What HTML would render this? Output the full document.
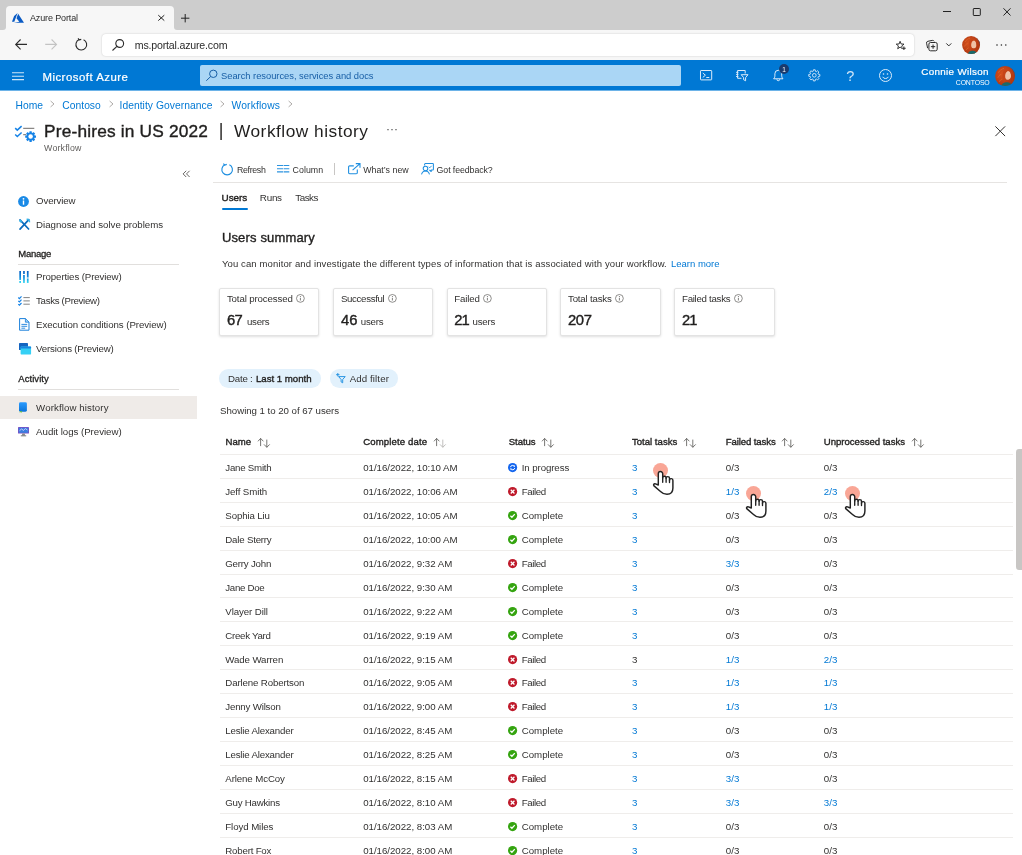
<!DOCTYPE html>
<html><head><meta charset="utf-8"><title>Azure Portal</title>
<style>
*{box-sizing:border-box;margin:0;padding:0}
html,body{width:1022px;height:855px;overflow:hidden;background:#fff}
body{font-family:"Liberation Sans","DejaVu Sans",sans-serif;color:#323130;font-size:10px;position:relative}
.a{position:absolute}
.t{position:absolute;white-space:nowrap;line-height:1}
.hl{position:absolute;height:1px;background:#efedeb}
.card{position:absolute;top:288px;width:100.2px;height:47.5px;background:#fff;border:1px solid #e3e3e3;border-radius:2px;box-shadow:0 1px 2.5px rgba(0,0,0,.13)}
.pill{position:absolute;top:369.3px;height:18.600px;border-radius:9.300px;background:#e2f1fc}
svg{position:absolute;overflow:visible}
</style></head><body>
<div class="a" style="left:0;top:0;width:1022px;height:60px;background:#f7f7f7"></div>
<div class="a" style="left:0;top:0;width:1022px;height:12px;background:#cdcdcd"></div>
<div class="a" style="left:0;top:0;width:5.900px;height:29.800px;background:#cdcdcd;border-radius:0 0 3px 0"></div>
<div class="a" style="left:173.900px;top:0;width:848.100px;height:29.800px;background:#cdcdcd;border-radius:0 0 0 3px"></div>
<div class="a" style="left:5.900px;top:5.700px;width:168px;height:12px;background:#f7f7f7;border-radius:4px 4px 0 0"></div>
<div class="a" style="left:102px;top:33.5px;width:812px;height:22.5px;background:#fff;border-radius:4px;box-shadow:0 0 2px rgba(0,0,0,.2)"></div>
<div class="a" style="left:0;top:60px;width:1022px;height:30px;background:#0078d4"></div>
<div class="a" style="left:0;top:90px;width:1022px;height:1px;background:#6db3e8"></div>
<div class="a" style="left:200px;top:65px;width:481px;height:20.500px;background:#aad6f5;border-radius:2px"></div>
<div class="a" style="left:0;top:395.5px;width:197px;height:23.5px;background:#efebe8"></div>
<div class="hl" style="left:18px;top:264px;width:161px;background:#e1dfdd"></div>
<div class="hl" style="left:18px;top:389px;width:161px;background:#e1dfdd"></div>
<div class="hl" style="left:213px;top:182px;width:794px;background:#e6e4e2"></div>
<div class="a" style="left:221.5px;top:208px;width:26px;height:2px;background:#0078d4;border-radius:1px"></div>
<div class="card" style="left:219.3px"></div>
<div class="card" style="left:333.3px"></div>
<div class="card" style="left:446.7px"></div>
<div class="card" style="left:560.4px"></div>
<div class="card" style="left:674.4px"></div>
<div class="pill" style="left:218.5px;width:102px"></div>
<div class="pill" style="left:329.5px;width:68px"></div>
<div class="hl" style="left:219.5px;top:453.80px;width:793.3px"></div>
<div class="hl" style="left:219.5px;top:477.74px;width:793.3px"></div>
<div class="hl" style="left:219.5px;top:501.68px;width:793.3px"></div>
<div class="hl" style="left:219.5px;top:525.62px;width:793.3px"></div>
<div class="hl" style="left:219.5px;top:549.56px;width:793.3px"></div>
<div class="hl" style="left:219.5px;top:573.50px;width:793.3px"></div>
<div class="hl" style="left:219.5px;top:597.44px;width:793.3px"></div>
<div class="hl" style="left:219.5px;top:621.38px;width:793.3px"></div>
<div class="hl" style="left:219.5px;top:645.32px;width:793.3px"></div>
<div class="hl" style="left:219.5px;top:669.26px;width:793.3px"></div>
<div class="hl" style="left:219.5px;top:693.20px;width:793.3px"></div>
<div class="hl" style="left:219.5px;top:717.14px;width:793.3px"></div>
<div class="hl" style="left:219.5px;top:741.08px;width:793.3px"></div>
<div class="hl" style="left:219.5px;top:765.02px;width:793.3px"></div>
<div class="hl" style="left:219.5px;top:788.96px;width:793.3px"></div>
<div class="hl" style="left:219.5px;top:812.90px;width:793.3px"></div>
<div class="hl" style="left:219.5px;top:836.84px;width:793.3px"></div>
<div class="hl" style="left:219.5px;top:860.78px;width:793.3px"></div>
<div class="a" style="left:1016px;top:448.700px;width:8px;height:121.700px;background:#c8c6c4;border-radius:3px"></div>
<svg style="left:508.44999999999993px;top:462.84999999999997px" width="9.2" height="9.2" viewBox="0 0 16 16"><circle cx="8" cy="8" r="8" fill="#1466ee"/><path d="M4.3 7.2a3.8 3.8 0 0 1 7-1.2M11.7 8.8a3.8 3.8 0 0 1-7 1.2" fill="none" stroke="#fff" stroke-width="1.7"/><path d="M11.9 3.6v3h-3zM4.1 12.4v-3h3z" fill="#fff"/></svg>
<svg style="left:508.44999999999993px;top:486.84999999999997px" width="9.2" height="9.2" viewBox="0 0 16 16"><circle cx="8" cy="8" r="8" fill="#bf1a2b"/><path d="M4.800 4.800l6.400 6.400M11.200 4.800l-6.400 6.400" fill="none" stroke="#fff" stroke-width="2.2"/></svg>
<svg style="left:508.44999999999993px;top:510.85px" width="9.2" height="9.2" viewBox="0 0 16 16"><circle cx="8" cy="8" r="8" fill="#35a410"/><path d="M4.2 8.3l2.6 2.6 5-5.4" fill="none" stroke="#fff" stroke-width="2.2"/></svg>
<svg style="left:508.44999999999993px;top:534.85px" width="9.2" height="9.2" viewBox="0 0 16 16"><circle cx="8" cy="8" r="8" fill="#35a410"/><path d="M4.2 8.3l2.6 2.6 5-5.4" fill="none" stroke="#fff" stroke-width="2.2"/></svg>
<svg style="left:508.44999999999993px;top:558.85px" width="9.2" height="9.2" viewBox="0 0 16 16"><circle cx="8" cy="8" r="8" fill="#bf1a2b"/><path d="M4.800 4.800l6.400 6.400M11.200 4.800l-6.400 6.400" fill="none" stroke="#fff" stroke-width="2.2"/></svg>
<svg style="left:508.44999999999993px;top:582.85px" width="9.2" height="9.2" viewBox="0 0 16 16"><circle cx="8" cy="8" r="8" fill="#35a410"/><path d="M4.2 8.3l2.6 2.6 5-5.4" fill="none" stroke="#fff" stroke-width="2.2"/></svg>
<svg style="left:508.44999999999993px;top:606.85px" width="9.2" height="9.2" viewBox="0 0 16 16"><circle cx="8" cy="8" r="8" fill="#35a410"/><path d="M4.2 8.3l2.6 2.6 5-5.4" fill="none" stroke="#fff" stroke-width="2.2"/></svg>
<svg style="left:508.44999999999993px;top:630.85px" width="9.2" height="9.2" viewBox="0 0 16 16"><circle cx="8" cy="8" r="8" fill="#35a410"/><path d="M4.2 8.3l2.6 2.6 5-5.4" fill="none" stroke="#fff" stroke-width="2.2"/></svg>
<svg style="left:508.44999999999993px;top:654.85px" width="9.2" height="9.2" viewBox="0 0 16 16"><circle cx="8" cy="8" r="8" fill="#bf1a2b"/><path d="M4.800 4.800l6.400 6.400M11.200 4.800l-6.400 6.400" fill="none" stroke="#fff" stroke-width="2.2"/></svg>
<svg style="left:508.44999999999993px;top:677.85px" width="9.2" height="9.2" viewBox="0 0 16 16"><circle cx="8" cy="8" r="8" fill="#bf1a2b"/><path d="M4.800 4.800l6.400 6.400M11.200 4.800l-6.400 6.400" fill="none" stroke="#fff" stroke-width="2.2"/></svg>
<svg style="left:508.44999999999993px;top:701.85px" width="9.2" height="9.2" viewBox="0 0 16 16"><circle cx="8" cy="8" r="8" fill="#bf1a2b"/><path d="M4.800 4.800l6.400 6.400M11.200 4.800l-6.400 6.400" fill="none" stroke="#fff" stroke-width="2.2"/></svg>
<svg style="left:508.44999999999993px;top:725.85px" width="9.2" height="9.2" viewBox="0 0 16 16"><circle cx="8" cy="8" r="8" fill="#35a410"/><path d="M4.2 8.3l2.6 2.6 5-5.4" fill="none" stroke="#fff" stroke-width="2.2"/></svg>
<svg style="left:508.44999999999993px;top:749.85px" width="9.2" height="9.2" viewBox="0 0 16 16"><circle cx="8" cy="8" r="8" fill="#35a410"/><path d="M4.2 8.3l2.6 2.6 5-5.4" fill="none" stroke="#fff" stroke-width="2.2"/></svg>
<svg style="left:508.44999999999993px;top:773.85px" width="9.2" height="9.2" viewBox="0 0 16 16"><circle cx="8" cy="8" r="8" fill="#bf1a2b"/><path d="M4.800 4.800l6.400 6.400M11.200 4.800l-6.400 6.400" fill="none" stroke="#fff" stroke-width="2.2"/></svg>
<svg style="left:508.44999999999993px;top:797.85px" width="9.2" height="9.2" viewBox="0 0 16 16"><circle cx="8" cy="8" r="8" fill="#bf1a2b"/><path d="M4.800 4.800l6.400 6.400M11.200 4.800l-6.400 6.400" fill="none" stroke="#fff" stroke-width="2.2"/></svg>
<svg style="left:508.44999999999993px;top:821.85px" width="9.2" height="9.2" viewBox="0 0 16 16"><circle cx="8" cy="8" r="8" fill="#35a410"/><path d="M4.2 8.3l2.6 2.6 5-5.4" fill="none" stroke="#fff" stroke-width="2.2"/></svg>
<svg style="left:508.44999999999993px;top:845.85px" width="9.2" height="9.2" viewBox="0 0 16 16"><circle cx="8" cy="8" r="8" fill="#35a410"/><path d="M4.2 8.3l2.6 2.6 5-5.4" fill="none" stroke="#fff" stroke-width="2.2"/></svg>
<div class="a" style="left:652.8px;top:463.2px;width:15.2px;height:15.2px;border-radius:50%;background:#f9a696"></div>
<svg style="left:653.0px;top:471.2px" width="21" height="24" viewBox="0 0 21 24"><path d="M5.3 14V2.7a2.2 2.2 0 0 1 4.4 0V7a1.7 1.7 0 0 1 3.4-.1V7.300a1.700 1.700 0 0 1 3.400 0V9.200a1.700 1.700 0 0 1 3.400.300V17c0 4-2.4 6.3-5.9 6.3-3 0-4.5-.8-6.5-2.8L1 14.9c-1-1 0-2.7 1.5-2.1z" fill="#fff" stroke="#222" stroke-width="1.450" stroke-linejoin="round"/><path d="M9.700 7V11.300M13.100 7.300V11.300M16.500 9.200V11.600" stroke="#222" stroke-width="1.350" fill="none" stroke-linecap="round"/></svg>
<div class="a" style="left:745.6px;top:486.0px;width:15.2px;height:15.2px;border-radius:50%;background:#f9a696"></div>
<svg style="left:745.8000000000001px;top:494.0px" width="21" height="24" viewBox="0 0 21 24"><path d="M5.3 14V2.7a2.2 2.2 0 0 1 4.4 0V7a1.7 1.7 0 0 1 3.4-.1V7.300a1.700 1.700 0 0 1 3.400 0V9.200a1.700 1.700 0 0 1 3.400.300V17c0 4-2.4 6.3-5.9 6.3-3 0-4.5-.8-6.5-2.8L1 14.9c-1-1 0-2.7 1.5-2.1z" fill="#fff" stroke="#222" stroke-width="1.450" stroke-linejoin="round"/><path d="M9.700 7V11.300M13.100 7.300V11.300M16.500 9.200V11.600" stroke="#222" stroke-width="1.350" fill="none" stroke-linecap="round"/></svg>
<div class="a" style="left:844.6999999999999px;top:486.0px;width:15.2px;height:15.2px;border-radius:50%;background:#f9a696"></div>
<svg style="left:844.9px;top:494.0px" width="21" height="24" viewBox="0 0 21 24"><path d="M5.3 14V2.7a2.2 2.2 0 0 1 4.4 0V7a1.7 1.7 0 0 1 3.4-.1V7.300a1.700 1.700 0 0 1 3.400 0V9.200a1.700 1.700 0 0 1 3.400.300V17c0 4-2.4 6.3-5.9 6.3-3 0-4.5-.8-6.5-2.8L1 14.9c-1-1 0-2.7 1.5-2.1z" fill="#fff" stroke="#222" stroke-width="1.450" stroke-linejoin="round"/><path d="M9.700 7V11.300M13.100 7.300V11.300M16.500 9.200V11.600" stroke="#222" stroke-width="1.350" fill="none" stroke-linecap="round"/></svg>
<svg style="left:257.9px;top:437.600px" width="12" height="10" viewBox="0 0 12 10"><path d="M2.600 8.100V.4M0 3.300L2.600.4l2.800 2.900" stroke="#605e5c" stroke-width=".85" fill="none"/><path d="M8.800 1.600v7.700M6 6.400l2.800 2.900 2.900-2.900" stroke="#605e5c" stroke-width=".85" fill="none"/></svg>
<svg style="left:434.0px;top:437.600px" width="12" height="10" viewBox="0 0 12 10"><path d="M2.600 8.100V.4M0 3.300L2.600.4l2.800 2.900" stroke="#605e5c" stroke-width=".85" fill="none"/><path d="M8.800 1.600v7.700M6 6.400l2.800 2.900 2.900-2.900" stroke="#b5b3b1" stroke-width=".85" fill="none"/></svg>
<svg style="left:542.2px;top:437.600px" width="12" height="10" viewBox="0 0 12 10"><path d="M2.600 8.100V.4M0 3.300L2.600.4l2.800 2.900" stroke="#605e5c" stroke-width=".85" fill="none"/><path d="M8.800 1.600v7.700M6 6.400l2.800 2.900 2.900-2.900" stroke="#605e5c" stroke-width=".85" fill="none"/></svg>
<svg style="left:684.1px;top:437.600px" width="12" height="10" viewBox="0 0 12 10"><path d="M2.600 8.100V.4M0 3.300L2.600.4l2.800 2.900" stroke="#605e5c" stroke-width=".85" fill="none"/><path d="M8.800 1.600v7.700M6 6.400l2.800 2.900 2.900-2.900" stroke="#605e5c" stroke-width=".85" fill="none"/></svg>
<svg style="left:782.4px;top:437.600px" width="12" height="10" viewBox="0 0 12 10"><path d="M2.600 8.100V.4M0 3.300L2.600.4l2.800 2.900" stroke="#605e5c" stroke-width=".85" fill="none"/><path d="M8.800 1.600v7.700M6 6.400l2.800 2.900 2.900-2.900" stroke="#605e5c" stroke-width=".85" fill="none"/></svg>
<svg style="left:911.8px;top:437.600px" width="12" height="10" viewBox="0 0 12 10"><path d="M2.600 8.100V.4M0 3.300L2.600.4l2.800 2.900" stroke="#605e5c" stroke-width=".85" fill="none"/><path d="M8.800 1.600v7.700M6 6.400l2.800 2.900 2.900-2.900" stroke="#605e5c" stroke-width=".85" fill="none"/></svg>
<svg style="left:296.3px;top:294.200px" width="8.800" height="8.800" viewBox="0 0 8.800 8.800"><circle cx="4.400" cy="4.400" r="3.900" stroke="#605e5c" stroke-width=".7" fill="none"/><path d="M4.400 3.800v2.700" stroke="#605e5c" stroke-width=".8"/><circle cx="4.400" cy="2.500" r=".5" fill="#605e5c"/></svg>
<svg style="left:388.0px;top:294.200px" width="8.800" height="8.800" viewBox="0 0 8.800 8.800"><circle cx="4.400" cy="4.400" r="3.900" stroke="#605e5c" stroke-width=".7" fill="none"/><path d="M4.400 3.800v2.700" stroke="#605e5c" stroke-width=".8"/><circle cx="4.400" cy="2.500" r=".5" fill="#605e5c"/></svg>
<svg style="left:483.2px;top:294.200px" width="8.800" height="8.800" viewBox="0 0 8.800 8.800"><circle cx="4.400" cy="4.400" r="3.900" stroke="#605e5c" stroke-width=".7" fill="none"/><path d="M4.400 3.800v2.700" stroke="#605e5c" stroke-width=".8"/><circle cx="4.400" cy="2.500" r=".5" fill="#605e5c"/></svg>
<svg style="left:615.2px;top:294.200px" width="8.800" height="8.800" viewBox="0 0 8.800 8.800"><circle cx="4.400" cy="4.400" r="3.900" stroke="#605e5c" stroke-width=".7" fill="none"/><path d="M4.400 3.800v2.700" stroke="#605e5c" stroke-width=".8"/><circle cx="4.400" cy="2.500" r=".5" fill="#605e5c"/></svg>
<svg style="left:733.9px;top:294.200px" width="8.800" height="8.800" viewBox="0 0 8.800 8.800"><circle cx="4.400" cy="4.400" r="3.900" stroke="#605e5c" stroke-width=".7" fill="none"/><path d="M4.400 3.800v2.700" stroke="#605e5c" stroke-width=".8"/><circle cx="4.400" cy="2.500" r=".5" fill="#605e5c"/></svg>
<!-- tab: azure logo -->
<svg style="left:12px;top:13px" width="12" height="9.8" viewBox="0 0 24 19.6"><path d="M11.2 0L4.2 6.2 0 17.6h4.6zM12.3 1.4L9 10.6l5.6 6.8L4 19.6h20z" fill="#0a5bc4"/></svg>
<!-- tab close / new tab -->
<svg style="left:158px;top:15px" width="6.6" height="5.8" viewBox="0 0 6.6 5.8"><path d="M.3.2l6 5.4M6.3.2l-6 5.4" stroke="#222" stroke-width="1" fill="none"/></svg>
<svg style="left:181px;top:13.5px" width="8.4" height="8.4" viewBox="0 0 8.4 8.4"><path d="M4.2 0v8.4M0 4.2h8.4" stroke="#222" stroke-width="1" fill="none"/></svg>
<!-- window controls -->
<svg style="left:943px;top:8px" width="70" height="8" viewBox="0 0 70 8"><path d="M0 3.5h8" stroke="#222" stroke-width="1" fill="none"/><rect x="30.3" y=".5" width="7" height="7" rx=".6" stroke="#222" stroke-width="1" fill="none"/><path d="M60.5.3l7 7.2M67.5.3l-7 7.2" stroke="#222" stroke-width="1" fill="none"/></svg>
<!-- nav: back, forward, reload -->
<svg style="left:15px;top:39px" width="12.2" height="11" viewBox="0 0 12.2 11"><path d="M12 5.4H.8M5.6.5L.7 5.4l4.9 4.9" stroke="#2b2b2b" stroke-width="1.1" fill="none"/></svg>
<svg style="left:44.8px;top:39px" width="12.2" height="11" viewBox="0 0 12.2 11"><path d="M.2 5.4h11.2M6.6.5l4.9 4.9-4.9 4.9" stroke="#c3c3c3" stroke-width="1.1" fill="none"/></svg>
<svg style="left:74.5px;top:38.2px" width="12.6" height="12.6" viewBox="0 0 12.6 12.6"><path d="M4.2 1.6A5.4 5.4 0 1 0 8.6 1.7" stroke="#2b2b2b" stroke-width="1.1" fill="none"/><path d="M3.6.1l.7 1.8 2 .2" stroke="#2b2b2b" stroke-width="1.1" fill="none" transform="rotate(-20 4.3 1.9)"/></svg>
<!-- url search icon -->
<svg style="left:112px;top:39px" width="12.6" height="12" viewBox="0 0 12.6 12"><circle cx="7.7" cy="4.5" r="3.9" stroke="#2b2b2b" stroke-width="1.1" fill="none"/><path d="M4.9 7.3L.5 11.5" stroke="#2b2b2b" stroke-width="1.1" fill="none"/></svg>
<!-- star, collections, chevron, avatar, dots -->
<svg style="left:896.400px;top:41px" width="10.500" height="9.500" viewBox="0 0 10.500 9.500"><path d="M4.10 0.30L5.13 2.98L8.00 3.13L5.76 4.94L6.51 7.72L4.10 6.15L1.69 7.72L2.44 4.94L0.20 3.13L3.07 2.98z" stroke="#2b2b2b" stroke-width=".95" fill="none" stroke-linejoin="round"/><path d="M7.900 5.600v3.400M6.200 7.300h3.400" stroke="#fff" stroke-width="2.400" fill="none"/><path d="M7.900 5.500v3.600M6.100 7.300h3.600" stroke="#2b2b2b" stroke-width="1.050" fill="none"/></svg>
<svg style="left:925.5px;top:39.500px" width="12" height="11.500" viewBox="0 0 12 11.500"><rect x="2.900" y="2.500" width="8.300" height="8.300" rx="1.600" stroke="#2b2b2b" stroke-width="1" fill="none"/><path d="M1.600 8.200L.6 3.200a1.600 1.600 0 0 1 1.200-1.900L6.400.4a1.600 1.600 0 0 1 1.700.9" stroke="#2b2b2b" stroke-width="1" fill="none"/><path d="M7.050 4.500v4.300M4.900 6.650h4.300" stroke="#2b2b2b" stroke-width="1" fill="none"/></svg>
<svg style="left:945.800px;top:43px" width="5.600" height="3.600" viewBox="0 0 5.600 3.600"><path d="M.3.400l2.500 2.500L5.300.4" stroke="#2b2b2b" stroke-width="1" fill="none"/></svg>
<svg style="left:962px;top:35.9px" width="18.2" height="18.2" viewBox="0 0 18 18"><defs><clipPath id="av1"><circle cx="9" cy="9" r="8.900"/></clipPath><radialGradient id="av1g" cx=".4" cy=".4" r=".7"><stop offset="0" stop-color="#d9541f"/><stop offset="1" stop-color="#a8320f"/></radialGradient></defs><g clip-path="url(#av1)"><rect width="18" height="18" fill="url(#av1g)"/><path d="M12.500 0H18v10c-.800-4.500-2.500-7.500-5.500-10z" fill="#4a4660"/><ellipse cx="11.300" cy="8.300" rx="2.900" ry="3.900" fill="#f0c2a6" transform="rotate(-8 11.300 8.300)"/><path d="M7.500 4.500c1.500-1.800 4-2.200 6-.8-2 .2-3.600 1.400-4.200 3.400-.5 1.800-.2 3.800.7 5.500l-2 2.400c-1.500-3.200-2-7.500-.5-10.500z" fill="#c64518"/><path d="M13.900 6c.8 2 .9 4.500.3 7l1.800 1.500c.9-3 .4-6.500-2.100-8.500z" fill="#b53b12"/><path d="M5.500 18c.8-2.600 3-3.700 5.200-3.500 2.300.2 4.300 1.300 5 3.500z" fill="#176a6c"/><path d="M3 6c1-2 3-3.500 5-3.800M2.500 10.500c.5-1.500 1.500-2.500 3-3M4 14c.5-1.200 1.300-2 2.500-2.300" stroke="#e8702f" stroke-width=".7" fill="none" opacity=".8"/></g></svg>
<svg style="left:996px;top:43.700px" width="11" height="2" viewBox="0 0 11 2"><circle cx="1" cy="1" r=".8" fill="#2b2b2b"/><circle cx="5.400" cy="1" r=".8" fill="#2b2b2b"/><circle cx="9.800" cy="1" r=".8" fill="#2b2b2b"/></svg>
<!-- header: hamburger -->
<svg style="left:12px;top:72px" width="12" height="8.400" viewBox="0 0 12 8.400"><path d="M0 .7h12M0 4.200h12M0 7.600h12" stroke="#cfe6f8" stroke-width="1.100" fill="none"/></svg>
<!-- search icon in search box -->
<svg style="left:206px;top:70px" width="11.500" height="11" viewBox="0 0 11.500 11"><circle cx="7.300" cy="3.800" r="3.700" stroke="#185fa6" stroke-width="1" fill="none"/><path d="M4.700 6.500L.3 10.700" stroke="#185fa6" stroke-width="1" fill="none"/></svg>
<!-- header icons -->
<svg style="left:700px;top:70.300px" width="12.200" height="10.400" viewBox="0 0 12.200 10.400"><rect x=".5" y=".5" width="11.200" height="9.400" rx=".6" stroke="#dcecfa" stroke-width="1" fill="none"/><path d="M2.800 3l2.600 2.200-2.600 2.200M6.300 7.500h3" stroke="#dcecfa" stroke-width="1" fill="none"/></svg>
<svg style="left:736.300px;top:69.800px" width="12.400" height="11.600" viewBox="0 0 12.400 11.600"><path d="M5.500 8.300H1.600V.5h7.600v3" stroke="#dcecfa" stroke-width="1" fill="none"/><path d="M0 2.300h2.400M0 4.400h2.400M0 6.500h2.400" stroke="#dcecfa" stroke-width=".9" fill="none"/><path d="M5.200 4.700h6.800L9.600 7.600v3.200L7.600 9.700V7.600z" stroke="#dcecfa" stroke-width="1" fill="none" stroke-linejoin="round"/></svg>
<svg style="left:773px;top:69.200px" width="10.600" height="12.800" viewBox="0 0 10.600 12.800"><path d="M.6 9.800c1-1 1.300-1.900 1.300-3.600V4.700a3.400 3.400 0 0 1 6.800 0v1.500c0 1.700.3 2.600 1.300 3.600z" stroke="#dcecfa" stroke-width="1" fill="none" stroke-linejoin="round"/><path d="M3.900 10.300a1.400 1.400 0 0 0 2.800 0" stroke="#dcecfa" stroke-width="1" fill="none"/></svg>
<div class="a" style="left:778.700px;top:63.700px;width:10px;height:10px;border-radius:50%;background:#1a3b6e"></div>
<svg style="left:807.700px;top:69.200px" width="12.600" height="12.600" viewBox="0 0 24 24"><path d="M12 8.500a3.500 3.500 0 1 0 0 7 3.500 3.500 0 0 0 0-7zM10.300 1.500h3.400l.5 2.900 1.700.7 2.400-1.700 2.400 2.400-1.700 2.400.7 1.700 2.900.5v3.400l-2.900.5-.7 1.700 1.700 2.400-2.400 2.400-2.400-1.700-1.700.7-.5 2.900h-3.400l-.5-2.900-1.700-.7-2.400 1.700-2.400-2.400 1.700-2.400-.7-1.700-2.900-.5v-3.400l2.900-.5.700-1.700-1.700-2.400 2.400-2.400 2.400 1.700 1.700-.7z" stroke="#dcecfa" stroke-width="1.700" fill="none" stroke-linejoin="round"/></svg>
<svg style="left:879.100px;top:68.800px" width="13" height="13" viewBox="0 0 13 13"><circle cx="6.500" cy="6.500" r="6" stroke="#dcecfa" stroke-width="1" fill="none"/><circle cx="4.500" cy="5" r=".8" fill="#dcecfa"/><circle cx="8.500" cy="5" r=".8" fill="#dcecfa"/><path d="M3.600 7.800a3.300 3.300 0 0 0 5.800 0" stroke="#dcecfa" stroke-width="1" fill="none"/></svg>
<!-- header avatar -->
<svg style="left:994.9px;top:65.6px" width="20.2" height="20.2" viewBox="0 0 18 18"><defs><clipPath id="av2"><circle cx="9" cy="9" r="8.900"/></clipPath><radialGradient id="av2g" cx=".4" cy=".4" r=".7"><stop offset="0" stop-color="#d9541f"/><stop offset="1" stop-color="#a8320f"/></radialGradient></defs><g clip-path="url(#av2)"><rect width="18" height="18" fill="url(#av2g)"/><path d="M12.500 0H18v10c-.800-4.500-2.500-7.500-5.500-10z" fill="#4a4660"/><ellipse cx="11.300" cy="8.300" rx="2.900" ry="3.900" fill="#f0c2a6" transform="rotate(-8 11.300 8.300)"/><path d="M7.500 4.500c1.500-1.800 4-2.200 6-.8-2 .2-3.600 1.400-4.200 3.400-.5 1.800-.2 3.800.7 5.500l-2 2.400c-1.500-3.200-2-7.500-.5-10.500z" fill="#c64518"/><path d="M13.900 6c.8 2 .9 4.500.3 7l1.800 1.500c.9-3 .4-6.500-2.100-8.500z" fill="#b53b12"/><path d="M5.500 18c.8-2.600 3-3.700 5.200-3.500 2.300.2 4.300 1.300 5 3.500z" fill="#176a6c"/><path d="M3 6c1-2 3-3.500 5-3.800M2.500 10.500c.5-1.500 1.500-2.500 3-3M4 14c.5-1.200 1.300-2 2.500-2.300" stroke="#e8702f" stroke-width=".7" fill="none" opacity=".8"/></g></svg>
<!-- close X blade -->
<svg style="left:994.900px;top:126.200px" width="10.500" height="10.500" viewBox="0 0 10.500 10.500"><path d="M.4.400l9.700 9.700M10.100.4L.4 10.100" stroke="#323130" stroke-width="1" fill="none"/></svg>
<!-- title icon -->
<svg style="left:14px;top:125px" width="23" height="18" viewBox="14 125 23 18"><path d="M15.200 128.100l2.100 2 4.300-4M15.200 134.500l2.100 2 4.300-4" stroke="#1683e6" stroke-width="1.500" fill="none"/><path d="M23.200 128.300H34.300M23.200 134.600h3" stroke="#8a8886" stroke-width="1.250" fill="none"/><g transform="translate(30.600 136.600)" fill="#1683e6"><rect x="-1.15" y="-5.400" width="2.300" height="2.400" rx=".3" transform="rotate(0)"/><rect x="-1.15" y="-5.400" width="2.300" height="2.400" rx=".3" transform="rotate(45)"/><rect x="-1.15" y="-5.400" width="2.300" height="2.400" rx=".3" transform="rotate(90)"/><rect x="-1.15" y="-5.400" width="2.300" height="2.400" rx=".3" transform="rotate(135)"/><rect x="-1.15" y="-5.400" width="2.300" height="2.400" rx=".3" transform="rotate(180)"/><rect x="-1.15" y="-5.400" width="2.300" height="2.400" rx=".3" transform="rotate(225)"/><rect x="-1.15" y="-5.400" width="2.300" height="2.400" rx=".3" transform="rotate(270)"/><rect x="-1.15" y="-5.400" width="2.300" height="2.400" rx=".3" transform="rotate(315)"/><circle r="4.100"/><circle r="2.250" fill="#fff"/></g></svg>
<!-- breadcrumb chevrons -->
<svg style="left:50.4px;top:99.900px" width="5" height="8" viewBox="0 0 5 8"><path d="M.6 1L4 3.950.6 6.900" stroke="#aaa7a4" stroke-width=".95" fill="none"/></svg>
<svg style="left:108.9px;top:99.900px" width="5" height="8" viewBox="0 0 5 8"><path d="M.6 1L4 3.950.6 6.900" stroke="#aaa7a4" stroke-width=".95" fill="none"/></svg>
<svg style="left:219.9px;top:99.900px" width="5" height="8" viewBox="0 0 5 8"><path d="M.6 1L4 3.950.6 6.900" stroke="#aaa7a4" stroke-width=".95" fill="none"/></svg>
<svg style="left:288.4px;top:99.900px" width="5" height="8" viewBox="0 0 5 8"><path d="M.6 1L4 3.950.6 6.900" stroke="#aaa7a4" stroke-width=".95" fill="none"/></svg>
<!-- sidebar icons -->
<svg style="left:18px;top:195.500px" width="11" height="11" viewBox="0 0 11 11"><circle cx="5.500" cy="5.500" r="5.400" fill="#1a8ae6"/><rect x="4.800" y="4.500" width="1.400" height="4.200" fill="#fff"/><circle cx="5.500" cy="2.800" r=".9" fill="#fff"/></svg>
<svg style="left:18.500px;top:219.300px" width="10.600" height="10.800" viewBox="0 0 10.600 10.800"><path d="M1 .8L9.600 10M9.800.6L1 10.200" stroke="#0a6cbd" stroke-width="1.700" fill="none" stroke-linecap="round"/><path d="M7.600.4a2.300 2.300 0 0 1 2.800 2.800" stroke="#35b4e8" stroke-width="1.500" fill="none"/><path d="M.6 1.200l1.800 1.800" stroke="#35b4e8" stroke-width="2" fill="none"/></svg>
<svg style="left:19px;top:270.800px" width="10" height="12" viewBox="0 0 10 12"><defs><linearGradient id="pg" x1="0" y1="0" x2="0" y2="1"><stop offset="0" stop-color="#0a5ec2"/><stop offset=".55" stop-color="#1490df"/><stop offset="1" stop-color="#3ddcf2"/></linearGradient></defs><rect x=".3" y="0" width="1.700" height="12" fill="url(#pg)"/><rect x="4.100" y="0" width="1.700" height="12" fill="url(#pg)"/><rect x="7.900" y="0" width="1.700" height="12" fill="url(#pg)"/><rect x="0" y="9" width="2.300" height="1" fill="#fff"/><rect x="3.800" y="3" width="2.300" height="1" fill="#fff"/><rect x="7.600" y="6.500" width="2.300" height="1" fill="#fff"/></svg>
<svg style="left:17.800px;top:295.500px" width="12" height="10" viewBox="0 0 12 10"><path d="M.3 1.500l1.100 1.100L3.500.4M.3 4.800l1.100 1.100 2.100-2.200M.3 8.100l1.100 1.100 2.100-2.200" stroke="#1683e6" stroke-width="1.200" fill="none"/><path d="M5.400 1.600h6.400M5.400 4.900h6.400M5.400 8.200h6.400" stroke="#7d7d7d" stroke-width=".95" fill="none"/></svg>
<svg style="left:18.800px;top:318.200px" width="10.600" height="12.800" viewBox="0 0 10.600 12.800"><path d="M.6.600h6l3.400 3.400v8.200H.6z" fill="#fff" stroke="#1a7fdb" stroke-width="1" stroke-linejoin="round"/><path d="M6.400.6v3.600H10" fill="#9cd0f5" stroke="#1a7fdb" stroke-width=".8"/><path d="M2.400 6.400h5.800M2.400 8.300h5.800M2.400 10.200h3.800" stroke="#1a7fdb" stroke-width=".9" fill="none"/></svg>
<svg style="left:19px;top:343.300px" width="12.200" height="11.500" viewBox="0 0 12.200 11.500"><rect x="0" y="0" width="9" height="7" rx=".6" fill="#1565c0"/><rect x="1.600" y="3.400" width="10.500" height="8" rx=".6" fill="#35d0f5"/><rect x="1.600" y="3.400" width="10.500" height="2" rx=".5" fill="#1a85e0"/></svg>
<svg style="left:19.400px;top:401.800px" width="7.900" height="11" viewBox="0 0 8.400 11"><defs><linearGradient id="wg" x1="0" y1="0" x2="0" y2="1"><stop offset="0" stop-color="#2a9bff"/><stop offset="1" stop-color="#0c74d8"/></linearGradient></defs><rect x="0" y="0" width="8.400" height="10" rx="1.500" fill="url(#wg)"/><path d="M.8 9.500h2.400v1.500l-1.200-.7-1.200.7z" fill="#67c23a"/></svg>
<svg style="left:17.500px;top:426.600px" width="11" height="9.400" viewBox="0 0 11 9.400"><rect x="0" y="0" width="11" height="6.600" rx=".6" fill="#7c4fc4"/><rect x=".8" y=".8" width="9.400" height="5" fill="#3b7ee0"/><path d="M1.600 3.600l2-1.600 1.800 1.400 2-1.800 2 1.400" stroke="#e8d8ff" stroke-width=".8" fill="none"/><path d="M4.300 6.600h2.400l.5 1.800H3.800z" fill="#8a8a8a"/><rect x="2.800" y="8.400" width="5.400" height=".9" fill="#6e6e6e"/></svg>
<!-- toolbar icons -->
<svg style="left:221px;top:162.800px" width="12.200" height="12.600" viewBox="0 0 12.200 12.600"><path d="M3.900 1.800A5.300 5.300 0 1 0 8.400 1.800" stroke="#1f8fe0" stroke-width="1.150" fill="none"/><path d="M2.700.3l1.100 1.800 2.100-.3" stroke="#1f8fe0" stroke-width="1.150" fill="none" transform="rotate(-12 3.800 2.100)"/></svg>
<svg style="left:277.100px;top:165.300px" width="12.400" height="7.600" viewBox="0 0 12.400 7.600"><path d="M0 .6h6M6.600.6h5.700M0 3.800h6M6.600 3.800h5.700M0 6.900h6M6.600 6.900h5.700" stroke="#2b93e0" stroke-width="1.050" fill="none"/></svg>
<div class="a" style="left:334.200px;top:163px;width:1px;height:12px;background:#c8c6c4"></div>
<svg style="left:347.800px;top:163.300px" width="12.800" height="11.400" viewBox="0 0 12.800 11.400"><path d="M5.800 2.900H1.700a1.100 1.100 0 0 0-1.100 1.100v5.700a1.100 1.100 0 0 0 1.100 1.100h6.500a1.100 1.100 0 0 0 1.100-1.100V6.400" stroke="#1f8fe0" stroke-width="1.100" fill="none"/><path d="M4.600 7.200L12 .6M7.800.6H12v4.200" stroke="#1f8fe0" stroke-width="1.100" fill="none"/></svg>
<svg style="left:420.800px;top:163.300px" width="13" height="11.600" viewBox="0 0 13 11.600"><path d="M3.600 2.600V1.300a.7.700 0 0 1 .7-.7h7.400a.7.700 0 0 1 .7.700v5a.7.700 0 0 1-.7.700h-1.500v1.500L8.400 7" stroke="#1f8fe0" stroke-width="1.050" fill="none" stroke-linejoin="round"/><circle cx="4.500" cy="5.600" r="2.300" stroke="#1f8fe0" stroke-width="1.050" fill="none"/><path d="M.5 11.400c.6-2.300 2.100-3.400 4-3.400s3.400 1.100 4 3.400" stroke="#1f8fe0" stroke-width="1.050" fill="none"/><path d="M7.800 3.800l1 1 1.800-2" stroke="#1f8fe0" stroke-width=".9" fill="none"/></svg>
<!-- filter icon -->
<svg style="left:335.800px;top:372.500px" width="9.600" height="10.500" viewBox="0 0 9.600 10.500"><path d="M2.600 3.600h6.600L6.700 6.500v3.300L5.100 8.900V6.500z" stroke="#1f8fe0" stroke-width=".95" fill="none" stroke-linejoin="round"/><path d="M1.800 0v3.400M.1 1.700h3.400" stroke="#1f8fe0" stroke-width=".95" fill="none"/></svg>
<!-- collapse chevrons -->
<svg style="left:182px;top:169.500px" width="9" height="8" viewBox="182 169.500 9 8"><path d="M186.200 170.300l-3.100 3.100 3.100 3.100M189.600 170.300l-3.100 3.100 3.100 3.100" stroke="#605e5c" stroke-width=".95" fill="none"/></svg>

<div id="txt" style="position:absolute;left:0;top:0;width:1022px;height:855px;will-change:transform">
<div class="t" style="left:29.9px;top:13.70px;font-size:9px;color:#2b2b2b;letter-spacing:-0.128px;">Azure Portal</div>
<div class="t" style="left:134.8px;top:39.60px;font-size:10.6px;color:#2b2b2b;letter-spacing:-0.183px;">ms.portal.azure.com</div>
<div class="t" style="left:42.4px;top:71.61px;font-size:11.4px;color:#fff;-webkit-text-stroke:0.22px #fff;letter-spacing:0.500px;">Microsoft Azure</div>
<div class="t" style="left:221px;top:71.31px;font-size:9.4px;color:#185fa6;letter-spacing:-0.035px;">Search resources, services and docs</div>
<div class="t" style="left:921.3px;top:67.41px;font-size:9.8px;color:#fff;-webkit-text-stroke:0.2px #fff;letter-spacing:0.341px;">Connie Wilson</div>
<div class="t" style="left:955.8px;top:80.20px;font-size:6.9px;color:#fff;letter-spacing:-0.131px;">CONTOSO</div>
<div class="t" style="left:782.3px;top:66.60px;font-size:6.5px;color:#fff;letter-spacing:-0.01em;">1</div>
<div class="t" style="left:846.2px;top:69.01px;font-size:14.5px;color:#cfe6f8;letter-spacing:-0.01em;">?</div>
<div class="t" style="left:15.5px;top:100.80px;font-size:10.3px;color:#0078d4;letter-spacing:0.008px;">Home</div>
<div class="t" style="left:62.3px;top:100.80px;font-size:10.3px;color:#0078d4;letter-spacing:0.020px;">Contoso</div>
<div class="t" style="left:119.5px;top:100.80px;font-size:10.3px;color:#0078d4;letter-spacing:0.044px;">Identity Governance</div>
<div class="t" style="left:231.6px;top:100.80px;font-size:10.3px;color:#0078d4;letter-spacing:0.123px;">Workflows</div>
<div class="t" style="left:44.1px;top:123.00px;font-size:17.3px;color:#201f1e;-webkit-text-stroke:0.38px #201f1e;letter-spacing:0.179px;">Pre-hires in US 2022</div>
<div class="t" style="left:218.8px;top:120.60px;font-size:18px;color:#201f1e;letter-spacing:-0.01em;">|</div>
<div class="t" style="left:234px;top:123.00px;font-size:17.3px;color:#201f1e;letter-spacing:0.504px;">Workflow history</div>
<div class="t" style="left:386px;top:123.41px;font-size:12px;color:#444;letter-spacing:0.000px;">···</div>
<div class="t" style="left:44.1px;top:144.00px;font-size:8.8px;color:#605e5c;letter-spacing:0.186px;">Workflow</div>
<div class="t" style="left:36.1px;top:196.31px;font-size:9.7px;color:#323130;letter-spacing:-0.122px;">Overview</div>
<div class="t" style="left:36.1px;top:220.31px;font-size:9.7px;color:#323130;letter-spacing:-0.024px;">Diagnose and solve problems</div>
<div class="t" style="left:18.3px;top:248.51px;font-size:9.5px;color:#201f1e;-webkit-text-stroke:0.3px #201f1e;letter-spacing:-0.274px;">Manage</div>
<div class="t" style="left:36.1px;top:272.31px;font-size:9.7px;color:#323130;letter-spacing:-0.113px;">Properties (Preview)</div>
<div class="t" style="left:36.1px;top:296.31px;font-size:9.7px;color:#323130;letter-spacing:-0.325px;">Tasks (Preview)</div>
<div class="t" style="left:36.1px;top:320.31px;font-size:9.7px;color:#323130;letter-spacing:-0.066px;">Execution conditions (Preview)</div>
<div class="t" style="left:36.1px;top:344.31px;font-size:9.7px;color:#323130;letter-spacing:-0.181px;">Versions (Preview)</div>
<div class="t" style="left:18.3px;top:373.51px;font-size:9.5px;color:#201f1e;-webkit-text-stroke:0.3px #201f1e;letter-spacing:0.051px;">Activity</div>
<div class="t" style="left:36.1px;top:403.31px;font-size:9.7px;color:#323130;letter-spacing:0.101px;">Workflow history</div>
<div class="t" style="left:36.1px;top:427.31px;font-size:9.7px;color:#323130;letter-spacing:-0.033px;">Audit logs (Preview)</div>
<div class="t" style="left:236.9px;top:165.61px;font-size:8.8px;color:#323130;letter-spacing:-0.316px;">Refresh</div>
<div class="t" style="left:292.6px;top:165.61px;font-size:8.8px;color:#323130;letter-spacing:0.031px;">Column</div>
<div class="t" style="left:363.2px;top:165.61px;font-size:8.8px;color:#323130;letter-spacing:0.019px;">What’s new</div>
<div class="t" style="left:436.6px;top:165.61px;font-size:8.8px;color:#323130;letter-spacing:-0.094px;">Got feedback?</div>
<div class="t" style="left:221.6px;top:193.01px;font-size:9.9px;color:#201f1e;-webkit-text-stroke:0.4px #201f1e;letter-spacing:-0.059px;">Users</div>
<div class="t" style="left:259.8px;top:193.01px;font-size:9.9px;color:#323130;letter-spacing:-0.266px;">Runs</div>
<div class="t" style="left:295.2px;top:193.01px;font-size:9.9px;color:#323130;letter-spacing:-0.490px;">Tasks</div>
<div class="t" style="left:221.9px;top:231.40px;font-size:13px;color:#201f1e;-webkit-text-stroke:0.36px #201f1e;letter-spacing:0.160px;">Users summary</div>
<div class="t" style="left:221.9px;top:259.20px;font-size:9.5px;color:#323130;letter-spacing:0.129px;">You can monitor and investigate the different types of information that is associated with your workflow.</div>
<div class="t" style="left:671px;top:259.20px;font-size:9.5px;color:#0078d4;letter-spacing:-0.009px;">Learn more</div>
<div class="t" style="left:226.9px;top:294.20px;font-size:9.7px;color:#323130;letter-spacing:-0.137px;">Total processed</div>
<div class="t" style="left:226.9px;top:312.61px;font-size:14.8px;color:#201f1e;-webkit-text-stroke:0.4px #201f1e;letter-spacing:-0.584px;">67</div>
<div class="t" style="left:340.90000000000003px;top:294.20px;font-size:9.7px;color:#323130;letter-spacing:-0.334px;">Successful</div>
<div class="t" style="left:340.90000000000003px;top:312.61px;font-size:14.8px;color:#201f1e;-webkit-text-stroke:0.4px #201f1e;letter-spacing:0.016px;">46</div>
<div class="t" style="left:454.3px;top:294.20px;font-size:9.7px;color:#323130;letter-spacing:-0.182px;">Failed</div>
<div class="t" style="left:454.3px;top:312.61px;font-size:14.8px;color:#201f1e;-webkit-text-stroke:0.4px #201f1e;letter-spacing:-1.084px;">21</div>
<div class="t" style="left:568.0px;top:294.20px;font-size:9.7px;color:#323130;letter-spacing:-0.197px;">Total tasks</div>
<div class="t" style="left:568.0px;top:312.61px;font-size:14.8px;color:#201f1e;-webkit-text-stroke:0.4px #201f1e;letter-spacing:-0.368px;">207</div>
<div class="t" style="left:682.0px;top:294.20px;font-size:9.7px;color:#323130;letter-spacing:-0.282px;">Failed tasks</div>
<div class="t" style="left:682.0px;top:312.61px;font-size:14.8px;color:#201f1e;-webkit-text-stroke:0.4px #201f1e;letter-spacing:-1.034px;">21</div>
<div class="t" style="left:246.9px;top:316.61px;font-size:9.7px;color:#323130;letter-spacing:-0.241px;">users</div>
<div class="t" style="left:360.8px;top:316.61px;font-size:9.7px;color:#323130;letter-spacing:-0.241px;">users</div>
<div class="t" style="left:472.5px;top:316.61px;font-size:9.7px;color:#323130;letter-spacing:-0.181px;">users</div>
<div class="t" style="left:228px;top:374.40px;font-size:9.7px;color:#323130;letter-spacing:-0.221px;">Date : </div>
<div class="t" style="left:256px;top:374.40px;font-size:9.7px;color:#201f1e;-webkit-text-stroke:0.35px #201f1e;letter-spacing:-0.043px;">Last 1 month</div>
<div class="t" style="left:349.7px;top:374.40px;font-size:9.7px;color:#323130;letter-spacing:0.107px;">Add filter</div>
<div class="t" style="left:220.1px;top:405.81px;font-size:9.7px;color:#323130;letter-spacing:-0.041px;">Showing 1 to 20 of 67 users</div>
<div class="t" style="left:225.6px;top:437.21px;font-size:9.6px;color:#201f1e;-webkit-text-stroke:0.35px #201f1e;letter-spacing:-0.023px;">Name</div>
<div class="t" style="left:363.2px;top:437.21px;font-size:9.6px;color:#201f1e;-webkit-text-stroke:0.35px #201f1e;letter-spacing:0.123px;">Complete date</div>
<div class="t" style="left:508.8px;top:437.21px;font-size:9.6px;color:#201f1e;-webkit-text-stroke:0.35px #201f1e;letter-spacing:-0.101px;">Status</div>
<div class="t" style="left:631.9px;top:437.21px;font-size:9.6px;color:#201f1e;-webkit-text-stroke:0.35px #201f1e;letter-spacing:0.007px;">Total tasks</div>
<div class="t" style="left:725.8px;top:437.21px;font-size:9.6px;color:#201f1e;-webkit-text-stroke:0.35px #201f1e;letter-spacing:-0.116px;">Failed tasks</div>
<div class="t" style="left:823.8px;top:437.21px;font-size:9.6px;color:#201f1e;-webkit-text-stroke:0.35px #201f1e;letter-spacing:-0.023px;">Unprocessed tasks</div>
<div class="t" style="left:225.3px;top:463.01px;font-size:9.7px;color:#323130;letter-spacing:-0.227px;">Jane Smith</div>
<div class="t" style="left:363.2px;top:463.01px;font-size:9.7px;color:#323130;letter-spacing:-0.021px;">01/16/2022, 10:10 AM</div>
<div class="t" style="left:521.7px;top:463.01px;font-size:9.7px;color:#323130;letter-spacing:-0.088px;">In progress</div>
<div class="t" style="left:631.9px;top:463.01px;font-size:9.7px;color:#0078d4;letter-spacing:-0.01em;">3</div>
<div class="t" style="left:725.8px;top:463.01px;font-size:9.7px;color:#323130;letter-spacing:0.110px;">0/3</div>
<div class="t" style="left:823.8px;top:463.01px;font-size:9.7px;color:#323130;letter-spacing:0.110px;">0/3</div>
<div class="t" style="left:225.3px;top:486.95px;font-size:9.7px;color:#323130;letter-spacing:-0.111px;">Jeff Smith</div>
<div class="t" style="left:363.2px;top:486.95px;font-size:9.7px;color:#323130;letter-spacing:-0.021px;">01/16/2022, 10:06 AM</div>
<div class="t" style="left:521.7px;top:486.95px;font-size:9.7px;color:#323130;letter-spacing:-0.398px;">Failed</div>
<div class="t" style="left:631.9px;top:486.95px;font-size:9.7px;color:#0078d4;letter-spacing:-0.01em;">3</div>
<div class="t" style="left:725.8px;top:486.95px;font-size:9.7px;color:#0078d4;letter-spacing:0.110px;">1/3</div>
<div class="t" style="left:823.8px;top:486.95px;font-size:9.7px;color:#0078d4;letter-spacing:0.110px;">2/3</div>
<div class="t" style="left:225.3px;top:510.89px;font-size:9.7px;color:#323130;letter-spacing:-0.120px;">Sophia Liu</div>
<div class="t" style="left:363.2px;top:510.89px;font-size:9.7px;color:#323130;letter-spacing:-0.021px;">01/16/2022, 10:05 AM</div>
<div class="t" style="left:521.7px;top:510.89px;font-size:9.7px;color:#323130;letter-spacing:0.004px;">Complete</div>
<div class="t" style="left:631.9px;top:510.89px;font-size:9.7px;color:#0078d4;letter-spacing:-0.01em;">3</div>
<div class="t" style="left:725.8px;top:510.89px;font-size:9.7px;color:#323130;letter-spacing:0.110px;">0/3</div>
<div class="t" style="left:823.8px;top:510.89px;font-size:9.7px;color:#323130;letter-spacing:0.110px;">0/3</div>
<div class="t" style="left:225.3px;top:534.82px;font-size:9.7px;color:#323130;letter-spacing:-0.205px;">Dale Sterry</div>
<div class="t" style="left:363.2px;top:534.82px;font-size:9.7px;color:#323130;letter-spacing:-0.021px;">01/16/2022, 10:00 AM</div>
<div class="t" style="left:521.7px;top:534.82px;font-size:9.7px;color:#323130;letter-spacing:0.004px;">Complete</div>
<div class="t" style="left:631.9px;top:534.82px;font-size:9.7px;color:#0078d4;letter-spacing:-0.01em;">3</div>
<div class="t" style="left:725.8px;top:534.82px;font-size:9.7px;color:#323130;letter-spacing:0.110px;">0/3</div>
<div class="t" style="left:823.8px;top:534.82px;font-size:9.7px;color:#323130;letter-spacing:0.110px;">0/3</div>
<div class="t" style="left:225.3px;top:558.76px;font-size:9.7px;color:#323130;letter-spacing:-0.212px;">Gerry John</div>
<div class="t" style="left:363.2px;top:558.76px;font-size:9.7px;color:#323130;letter-spacing:-0.022px;">01/16/2022, 9:32 AM</div>
<div class="t" style="left:521.7px;top:558.76px;font-size:9.7px;color:#323130;letter-spacing:-0.398px;">Failed</div>
<div class="t" style="left:631.9px;top:558.76px;font-size:9.7px;color:#0078d4;letter-spacing:-0.01em;">3</div>
<div class="t" style="left:725.8px;top:558.76px;font-size:9.7px;color:#0078d4;letter-spacing:0.110px;">3/3</div>
<div class="t" style="left:823.8px;top:558.76px;font-size:9.7px;color:#323130;letter-spacing:0.110px;">0/3</div>
<div class="t" style="left:225.3px;top:582.70px;font-size:9.7px;color:#323130;letter-spacing:-0.311px;">Jane Doe</div>
<div class="t" style="left:363.2px;top:582.70px;font-size:9.7px;color:#323130;letter-spacing:-0.022px;">01/16/2022, 9:30 AM</div>
<div class="t" style="left:521.7px;top:582.70px;font-size:9.7px;color:#323130;letter-spacing:0.004px;">Complete</div>
<div class="t" style="left:631.9px;top:582.70px;font-size:9.7px;color:#0078d4;letter-spacing:-0.01em;">3</div>
<div class="t" style="left:725.8px;top:582.70px;font-size:9.7px;color:#323130;letter-spacing:0.110px;">0/3</div>
<div class="t" style="left:823.8px;top:582.70px;font-size:9.7px;color:#323130;letter-spacing:0.110px;">0/3</div>
<div class="t" style="left:225.3px;top:606.65px;font-size:9.7px;color:#323130;letter-spacing:-0.092px;">Vlayer Dill</div>
<div class="t" style="left:363.2px;top:606.65px;font-size:9.7px;color:#323130;letter-spacing:-0.022px;">01/16/2022, 9:22 AM</div>
<div class="t" style="left:521.7px;top:606.65px;font-size:9.7px;color:#323130;letter-spacing:0.004px;">Complete</div>
<div class="t" style="left:631.9px;top:606.65px;font-size:9.7px;color:#0078d4;letter-spacing:-0.01em;">3</div>
<div class="t" style="left:725.8px;top:606.65px;font-size:9.7px;color:#323130;letter-spacing:0.110px;">0/3</div>
<div class="t" style="left:823.8px;top:606.65px;font-size:9.7px;color:#323130;letter-spacing:0.110px;">0/3</div>
<div class="t" style="left:225.3px;top:630.59px;font-size:9.7px;color:#323130;letter-spacing:-0.271px;">Creek Yard</div>
<div class="t" style="left:363.2px;top:630.59px;font-size:9.7px;color:#323130;letter-spacing:-0.022px;">01/16/2022, 9:19 AM</div>
<div class="t" style="left:521.7px;top:630.59px;font-size:9.7px;color:#323130;letter-spacing:0.004px;">Complete</div>
<div class="t" style="left:631.9px;top:630.59px;font-size:9.7px;color:#0078d4;letter-spacing:-0.01em;">3</div>
<div class="t" style="left:725.8px;top:630.59px;font-size:9.7px;color:#323130;letter-spacing:0.110px;">0/3</div>
<div class="t" style="left:823.8px;top:630.59px;font-size:9.7px;color:#323130;letter-spacing:0.110px;">0/3</div>
<div class="t" style="left:225.3px;top:654.53px;font-size:9.7px;color:#323130;letter-spacing:-0.104px;">Wade Warren</div>
<div class="t" style="left:363.2px;top:654.53px;font-size:9.7px;color:#323130;letter-spacing:-0.022px;">01/16/2022, 9:15 AM</div>
<div class="t" style="left:521.7px;top:654.53px;font-size:9.7px;color:#323130;letter-spacing:-0.398px;">Failed</div>
<div class="t" style="left:631.9px;top:654.53px;font-size:9.7px;color:#323130;letter-spacing:-0.01em;">3</div>
<div class="t" style="left:725.8px;top:654.53px;font-size:9.7px;color:#0078d4;letter-spacing:0.110px;">1/3</div>
<div class="t" style="left:823.8px;top:654.53px;font-size:9.7px;color:#0078d4;letter-spacing:0.110px;">2/3</div>
<div class="t" style="left:225.3px;top:678.46px;font-size:9.7px;color:#323130;letter-spacing:-0.137px;">Darlene Robertson</div>
<div class="t" style="left:363.2px;top:678.46px;font-size:9.7px;color:#323130;letter-spacing:-0.022px;">01/16/2022, 9:05 AM</div>
<div class="t" style="left:521.7px;top:678.46px;font-size:9.7px;color:#323130;letter-spacing:-0.398px;">Failed</div>
<div class="t" style="left:631.9px;top:678.46px;font-size:9.7px;color:#0078d4;letter-spacing:-0.01em;">3</div>
<div class="t" style="left:725.8px;top:678.46px;font-size:9.7px;color:#0078d4;letter-spacing:0.110px;">1/3</div>
<div class="t" style="left:823.8px;top:678.46px;font-size:9.7px;color:#0078d4;letter-spacing:0.110px;">1/3</div>
<div class="t" style="left:225.3px;top:702.40px;font-size:9.7px;color:#323130;letter-spacing:-0.185px;">Jenny Wilson</div>
<div class="t" style="left:363.2px;top:702.40px;font-size:9.7px;color:#323130;letter-spacing:-0.022px;">01/16/2022, 9:00 AM</div>
<div class="t" style="left:521.7px;top:702.40px;font-size:9.7px;color:#323130;letter-spacing:-0.398px;">Failed</div>
<div class="t" style="left:631.9px;top:702.40px;font-size:9.7px;color:#0078d4;letter-spacing:-0.01em;">3</div>
<div class="t" style="left:725.8px;top:702.40px;font-size:9.7px;color:#0078d4;letter-spacing:0.110px;">1/3</div>
<div class="t" style="left:823.8px;top:702.40px;font-size:9.7px;color:#0078d4;letter-spacing:0.110px;">1/3</div>
<div class="t" style="left:225.3px;top:726.34px;font-size:9.7px;color:#323130;letter-spacing:-0.181px;">Leslie Alexander</div>
<div class="t" style="left:363.2px;top:726.34px;font-size:9.7px;color:#323130;letter-spacing:-0.022px;">01/16/2022, 8:45 AM</div>
<div class="t" style="left:521.7px;top:726.34px;font-size:9.7px;color:#323130;letter-spacing:0.004px;">Complete</div>
<div class="t" style="left:631.9px;top:726.34px;font-size:9.7px;color:#0078d4;letter-spacing:-0.01em;">3</div>
<div class="t" style="left:725.8px;top:726.34px;font-size:9.7px;color:#323130;letter-spacing:0.110px;">0/3</div>
<div class="t" style="left:823.8px;top:726.34px;font-size:9.7px;color:#323130;letter-spacing:0.110px;">0/3</div>
<div class="t" style="left:225.3px;top:750.29px;font-size:9.7px;color:#323130;letter-spacing:-0.181px;">Leslie Alexander</div>
<div class="t" style="left:363.2px;top:750.29px;font-size:9.7px;color:#323130;letter-spacing:-0.022px;">01/16/2022, 8:25 AM</div>
<div class="t" style="left:521.7px;top:750.29px;font-size:9.7px;color:#323130;letter-spacing:0.004px;">Complete</div>
<div class="t" style="left:631.9px;top:750.29px;font-size:9.7px;color:#0078d4;letter-spacing:-0.01em;">3</div>
<div class="t" style="left:725.8px;top:750.29px;font-size:9.7px;color:#323130;letter-spacing:0.110px;">0/3</div>
<div class="t" style="left:823.8px;top:750.29px;font-size:9.7px;color:#323130;letter-spacing:0.110px;">0/3</div>
<div class="t" style="left:225.3px;top:774.23px;font-size:9.7px;color:#323130;letter-spacing:-0.112px;">Arlene McCoy</div>
<div class="t" style="left:363.2px;top:774.23px;font-size:9.7px;color:#323130;letter-spacing:-0.022px;">01/16/2022, 8:15 AM</div>
<div class="t" style="left:521.7px;top:774.23px;font-size:9.7px;color:#323130;letter-spacing:-0.398px;">Failed</div>
<div class="t" style="left:631.9px;top:774.23px;font-size:9.7px;color:#0078d4;letter-spacing:-0.01em;">3</div>
<div class="t" style="left:725.8px;top:774.23px;font-size:9.7px;color:#0078d4;letter-spacing:0.110px;">3/3</div>
<div class="t" style="left:823.8px;top:774.23px;font-size:9.7px;color:#323130;letter-spacing:0.110px;">0/3</div>
<div class="t" style="left:225.3px;top:798.17px;font-size:9.7px;color:#323130;letter-spacing:-0.234px;">Guy Hawkins</div>
<div class="t" style="left:363.2px;top:798.17px;font-size:9.7px;color:#323130;letter-spacing:-0.022px;">01/16/2022, 8:10 AM</div>
<div class="t" style="left:521.7px;top:798.17px;font-size:9.7px;color:#323130;letter-spacing:-0.398px;">Failed</div>
<div class="t" style="left:631.9px;top:798.17px;font-size:9.7px;color:#0078d4;letter-spacing:-0.01em;">3</div>
<div class="t" style="left:725.8px;top:798.17px;font-size:9.7px;color:#0078d4;letter-spacing:0.110px;">3/3</div>
<div class="t" style="left:823.8px;top:798.17px;font-size:9.7px;color:#0078d4;letter-spacing:0.110px;">3/3</div>
<div class="t" style="left:225.3px;top:822.11px;font-size:9.7px;color:#323130;letter-spacing:-0.091px;">Floyd Miles</div>
<div class="t" style="left:363.2px;top:822.11px;font-size:9.7px;color:#323130;letter-spacing:-0.022px;">01/16/2022, 8:03 AM</div>
<div class="t" style="left:521.7px;top:822.11px;font-size:9.7px;color:#323130;letter-spacing:0.004px;">Complete</div>
<div class="t" style="left:631.9px;top:822.11px;font-size:9.7px;color:#0078d4;letter-spacing:-0.01em;">3</div>
<div class="t" style="left:725.8px;top:822.11px;font-size:9.7px;color:#323130;letter-spacing:0.110px;">0/3</div>
<div class="t" style="left:823.8px;top:822.11px;font-size:9.7px;color:#323130;letter-spacing:0.110px;">0/3</div>
<div class="t" style="left:225.3px;top:846.04px;font-size:9.7px;color:#323130;letter-spacing:-0.202px;">Robert Fox</div>
<div class="t" style="left:363.2px;top:846.04px;font-size:9.7px;color:#323130;letter-spacing:-0.022px;">01/16/2022, 8:00 AM</div>
<div class="t" style="left:521.7px;top:846.04px;font-size:9.7px;color:#323130;letter-spacing:0.004px;">Complete</div>
<div class="t" style="left:631.9px;top:846.04px;font-size:9.7px;color:#0078d4;letter-spacing:-0.01em;">3</div>
<div class="t" style="left:725.8px;top:846.04px;font-size:9.7px;color:#323130;letter-spacing:0.110px;">0/3</div>
<div class="t" style="left:823.8px;top:846.04px;font-size:9.7px;color:#323130;letter-spacing:0.110px;">0/3</div>
</div>
</body></html>
